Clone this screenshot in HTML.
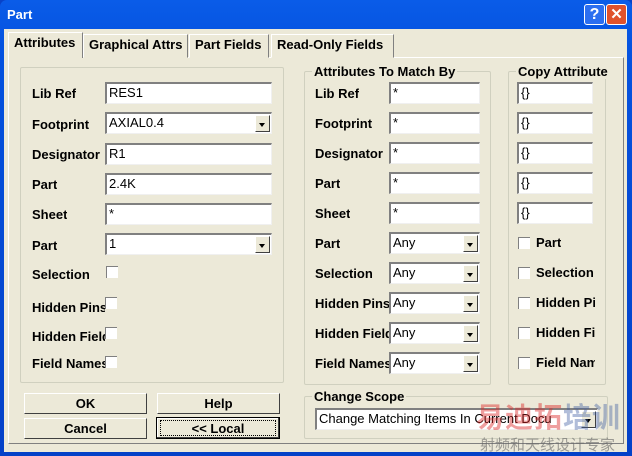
<!DOCTYPE html><html><head><style>
*{box-sizing:border-box}
html,body{overflow:hidden}
body{margin:0;width:632px;height:456px;overflow:hidden;background:#0842c8;font-family:"Liberation Sans",sans-serif;font-size:13px;font-weight:bold;color:#000}
.a{position:absolute}
#win{position:absolute;left:0;top:0;width:632px;height:456px;background:linear-gradient(#0a5ce8,#0553e0 10%,#0441c8);border-radius:7px 7px 0 0;overflow:hidden}
#body{position:absolute;left:4px;top:29px;width:623px;height:423px;background:#ece9d8}
.tb{position:absolute;top:4px;width:21px;height:21px;border:1px solid #fff;border-radius:3px;color:#fff;font-size:16px;text-align:center;line-height:19px}
.grp{position:absolute;border:1px solid #d0d0bf;border-radius:2px}
.grp>.t{position:absolute;top:-8px;left:7px;background:#ece9d8;padding:0 2px;white-space:nowrap;overflow:hidden}
.lbl{position:absolute;white-space:nowrap;overflow:hidden}
.in{position:absolute;background:#fff;height:22px;border-top:2px solid #808080;border-left:2px solid #808080;border-right:1px solid #f0f0f0;border-bottom:1px solid #f0f0f0;padding-left:2px;font-weight:normal;font-size:13px;line-height:18px;font-family:"Liberation Sans",sans-serif;white-space:nowrap;overflow:hidden}
.dd{position:absolute;right:1px;top:1px;width:15px;height:17px;background:#ece9d8;border:1px solid;border-color:#fff #404040 #404040 #fff}
.dd:after{content:"";position:absolute;left:3px;top:7px;border:3.5px solid transparent;border-top:4px solid #000;border-bottom:0}
.cb{position:absolute;width:12px;height:12px;background:#fff;border-top:1px solid #808080;border-left:1px solid #808080}
.btn{position:absolute;height:21px;background:#ece9d8;border:1px solid;border-color:#fff #404040 #404040 #fff;text-align:center;line-height:19px;font-size:13px}
.tab{position:absolute;top:34px;height:24px;border:1px solid;border-color:#fff #808080 transparent #fff;line-height:20px;padding:0 5px;background:#ece9d8;font-size:13px;white-space:nowrap;overflow:hidden}
</style></head><body>
<div id="win">
<div class="a" style="left:7px;top:7px;color:#fff;font-size:13px">Part</div>
<div class="tb" style="left:584px;background:#2c6ff0">?</div>
<div class="tb" style="left:606px;background:#e0522c;font-size:15px">✕</div>
<div id="body"></div>
</div>
<div class="a" style="left:8px;top:57px;width:616px;height:387px;border:1px solid;border-color:#fff #808080 #808080 #fff"></div>
<div class="tab" style="left:8px;top:32px;height:26px;border-bottom:none;width:75px;z-index:2">Attributes</div>
<div class="tab" style="left:83px;width:105px">Graphical Attrs</div>
<div class="tab" style="left:189px;width:80px">Part Fields</div>
<div class="tab" style="left:271px;width:123px">Read-Only Fields</div>

<div class="grp" style="left:20px;top:67px;width:264px;height:316px"></div>
<div class="lbl" style="left:32px;top:86px">Lib Ref</div><div class="in" style="left:105px;top:82px;width:167px">RES1</div>
<div class="lbl" style="left:32px;top:117px">Footprint</div><div class="in" style="left:105px;top:112px;width:167px">AXIAL0.4<div class="dd"></div></div>
<div class="lbl" style="left:32px;top:147px;width:69px">Designator</div><div class="in" style="left:105px;top:143px;width:167px">R1</div>
<div class="lbl" style="left:32px;top:177px">Part</div><div class="in" style="left:105px;top:173px;width:167px">2.4K</div>
<div class="lbl" style="left:32px;top:207px">Sheet</div><div class="in" style="left:105px;top:203px;width:167px">*</div>
<div class="lbl" style="left:32px;top:238px">Part</div><div class="in" style="left:105px;top:233px;width:167px">1<div class="dd"></div></div>
<div class="lbl" style="left:32px;top:267px">Selection</div><div class="cb" style="left:106px;top:266px"></div>
<div class="lbl" style="left:32px;top:300px;width:73px">Hidden Pins</div><div class="cb" style="left:105px;top:297px"></div>
<div class="lbl" style="left:32px;top:329px;width:73px">Hidden Fields</div><div class="cb" style="left:105px;top:327px"></div>
<div class="lbl" style="left:32px;top:356px;width:73px">Field Names</div><div class="cb" style="left:105px;top:356px"></div>

<div class="grp" style="left:304px;top:71px;width:187px;height:314px"><div class="t">Attributes To Match By</div></div>
<div class="lbl" style="left:315px;top:86px">Lib Ref</div><div class="in" style="left:389px;top:82px;width:91px">*</div>
<div class="lbl" style="left:315px;top:116px">Footprint</div><div class="in" style="left:389px;top:112px;width:91px">*</div>
<div class="lbl" style="left:315px;top:146px;width:72px">Designator</div><div class="in" style="left:389px;top:142px;width:91px">*</div>
<div class="lbl" style="left:315px;top:176px">Part</div><div class="in" style="left:389px;top:172px;width:91px">*</div>
<div class="lbl" style="left:315px;top:206px">Sheet</div><div class="in" style="left:389px;top:202px;width:91px">*</div>
<div class="lbl" style="left:315px;top:236px">Part</div><div class="in" style="left:389px;top:232px;width:91px">Any<div class="dd"></div></div>
<div class="lbl" style="left:315px;top:266px">Selection</div><div class="in" style="left:389px;top:262px;width:91px">Any<div class="dd"></div></div>
<div class="lbl" style="left:315px;top:296px;width:74px">Hidden Pins</div><div class="in" style="left:389px;top:292px;width:91px">Any<div class="dd"></div></div>
<div class="lbl" style="left:315px;top:326px;width:74px">Hidden Fields</div><div class="in" style="left:389px;top:322px;width:91px">Any<div class="dd"></div></div>
<div class="lbl" style="left:315px;top:356px;width:74px">Field Names</div><div class="in" style="left:389px;top:352px;width:91px">Any<div class="dd"></div></div>

<div class="grp" style="left:508px;top:71px;width:98px;height:314px"><div class="t" style="width:99px;left:7px;padding-right:0">Copy Attribute</div></div>
<div class="in" style="left:517px;top:82px;width:76px">{}</div>
<div class="in" style="left:517px;top:112px;width:76px">{}</div>
<div class="in" style="left:517px;top:142px;width:76px">{}</div>
<div class="in" style="left:517px;top:172px;width:76px">{}</div>
<div class="in" style="left:517px;top:202px;width:76px">{}</div>
<div class="cb" style="left:518px;top:237px"></div><div class="lbl" style="left:536px;top:235px">Part</div>
<div class="cb" style="left:518px;top:267px"></div><div class="lbl" style="left:536px;top:265px;width:59px">Selection</div>
<div class="cb" style="left:518px;top:297px"></div><div class="lbl" style="left:536px;top:295px;width:59px">Hidden Pins</div>
<div class="cb" style="left:518px;top:327px"></div><div class="lbl" style="left:536px;top:325px;width:59px">Hidden Fields</div>
<div class="cb" style="left:518px;top:357px"></div><div class="lbl" style="left:536px;top:355px;width:59px">Field Names</div>

<div class="btn" style="left:24px;top:393px;width:123px">OK</div>
<div class="btn" style="left:157px;top:393px;width:123px">Help</div>
<div class="btn" style="left:24px;top:418px;width:123px">Cancel</div>
<div class="btn" style="left:156px;top:417px;width:124px;height:22px;border:1px solid #000;box-shadow:inset -1px -1px #404040,inset 1px 1px #fff"><div style="position:absolute;left:3px;top:2px;right:3px;bottom:2px;border:1px dotted #000;line-height:15px">&lt;&lt; Local</div></div>

<div class="grp" style="left:304px;top:396px;width:304px;height:43px"><div class="t">Change Scope</div></div>
<div class="in" style="left:315px;top:408px;width:283px;font-size:13px">Change Matching Items In Current Docu<div class="dd"></div></div>
<div class="a" style="left:476px;top:400px;width:156px;white-space:nowrap;overflow:hidden;color:rgba(220,40,40,.45);font-size:28px;line-height:32px;font-family:'Noto Sans CJK SC',sans-serif;letter-spacing:1px">易迪拓<span style="color:rgba(60,90,160,.4)">培训</span></div>
<div class="a" style="left:480px;top:436px;width:152px;white-space:nowrap;overflow:hidden;color:rgba(100,100,100,.6);font-size:15px;line-height:18px;font-family:'Noto Sans CJK SC',sans-serif;font-weight:normal">射频和天线设计专家</div>
</body></html>
